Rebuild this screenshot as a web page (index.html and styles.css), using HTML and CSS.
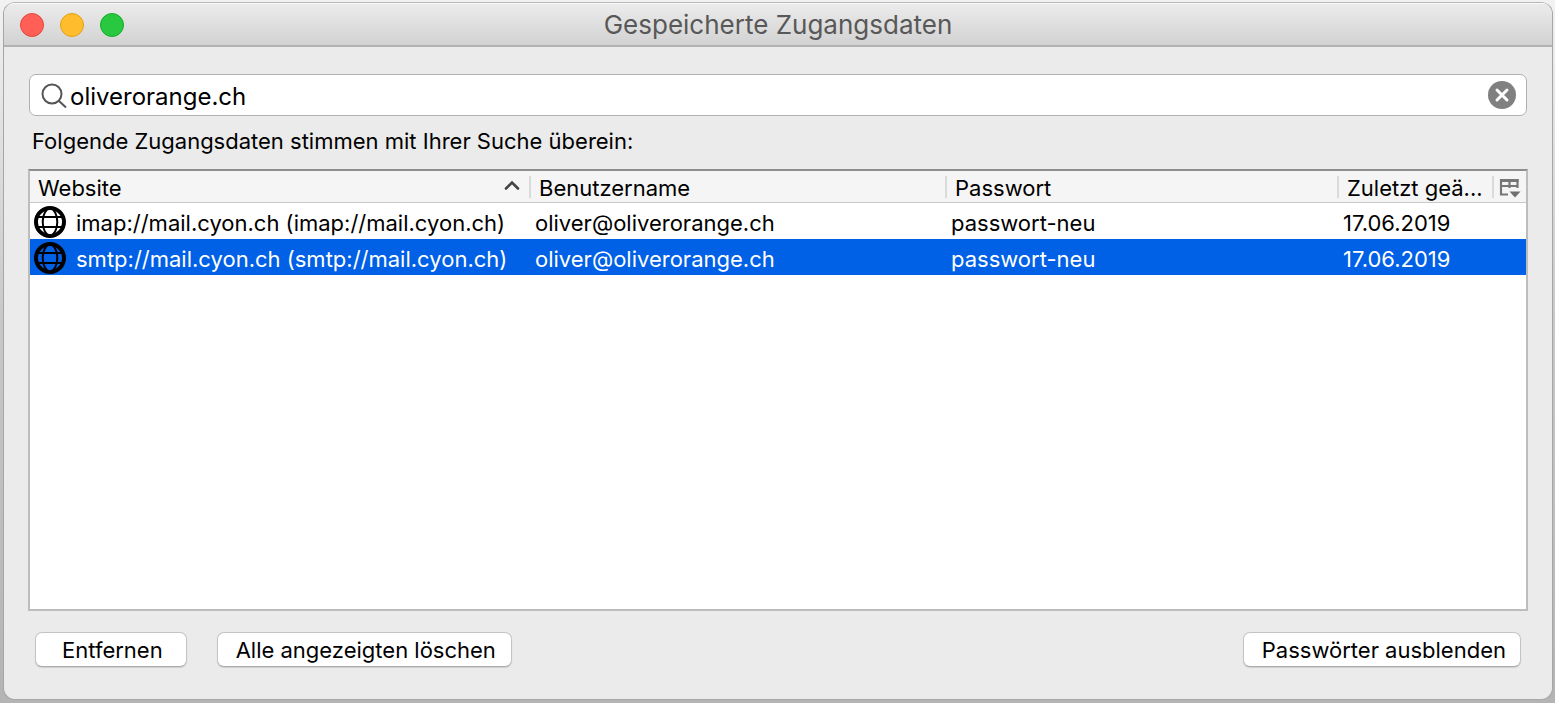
FILE: index.html
```html
<!DOCTYPE html>
<html lang="de">
<head>
<meta charset="utf-8">
<title>Gespeicherte Zugangsdaten</title>
<link rel="stylesheet" href="styles.css">
</head>
<body>
<svg class="defs" aria-hidden="true">
  <symbol id="globe" viewBox="0 0 32 32">
    <g fill="none" stroke="currentColor">
      <circle cx="16" cy="16" r="14" stroke-width="4"/>
      <ellipse cx="16" cy="16" rx="7.3" ry="13.5" stroke-width="2"/>
      <path d="M4 11h24M4 21h24" stroke-width="2"/>
    </g>
  </symbol>
</svg>
<main class="window">
  <header class="titlebar">
    <div class="lights">
      <button class="light close" aria-label="Schliessen"></button>
      <button class="light minimize" aria-label="Minimieren"></button>
      <button class="light maximize" aria-label="Maximieren"></button>
    </div>
    <h1 class="title">Gespeicherte Zugangsdaten</h1>
  </header>
  <div class="content">
    <div class="search">
      <svg class="search-icon" viewBox="0 0 26 26" aria-hidden="true"><g fill="none" stroke="#555" stroke-width="2"><circle cx="11" cy="11" r="9.5"/><path d="M17.5 17.5l7.5 7"/></g></svg>
      <input class="search-input" type="text" value="oliverorange.ch" aria-label="Suchen">
      <button class="clear" aria-label="Suche leeren"><svg viewBox="0 0 28 28"><circle cx="14" cy="14" r="14" fill="#808080"/><path d="M9 9l10 10M19 9L9 19" stroke="#fff" stroke-width="3" stroke-linecap="round"/></svg></button>
    </div>
    <p class="hint">Folgende Zugangsdaten stimmen mit Ihrer Suche überein:</p>
    <div class="list">
      <table class="logins">
        <colgroup><col><col class="col-user"><col class="col-pass"><col class="col-date"><col class="col-picker"></colgroup>
        <thead>
          <tr>
            <th><div class="head"><span>Website</span><svg class="sort" viewBox="0 0 16 10" aria-hidden="true"><path d="M2 8.5l6-6 6 6" fill="none" stroke="#444" stroke-width="2.6" stroke-linecap="round"/></svg></div></th>
            <th><div class="head">Benutzername</div></th>
            <th><div class="head">Passwort</div></th>
            <th><div class="head"><span class="clip">Zuletzt geä...</span></div></th>
            <th><div class="head last"><button class="picker" aria-label="Spalten wählen"><svg viewBox="0 0 22 20"><path d="M9 16.500H2V2H18.500V10M1 8H19.500M10.500 2V10" fill="none" stroke="#777" stroke-width="2.200"/><path d="M1 2.500H19.600" stroke="#777" stroke-width="3"/><path d="M10.500 13.500H21.500L16 19.500Z" fill="#707070"/></svg></button></div></th>
          </tr>
        </thead>
        <tbody>
          <tr>
            <td><div class="site"><svg class="globe"><use href="#globe"/></svg><span>imap://mail.cyon.ch (imap://mail.cyon.ch)</span></div></td>
            <td>oliver@oliverorange.ch</td><td>passwort-neu</td><td>17.06.2019</td><td></td>
          </tr>
          <tr class="selected">
            <td><div class="site"><svg class="globe"><use href="#globe"/></svg><span>smtp://mail.cyon.ch (smtp://mail.cyon.ch)</span></div></td>
            <td>oliver@oliverorange.ch</td><td>passwort-neu</td><td>17.06.2019</td><td></td>
          </tr>
        </tbody>
      </table>
    </div>
    <footer class="actions">
      <button class="button remove">Entfernen</button>
      <button class="button">Alle angezeigten löschen</button>
      <button class="button toggle">Passwörter ausblenden</button>
    </footer>
  </div>
</main>
</body>
</html>
```
FILE: styles.css
```css
* { box-sizing: border-box; }
body {
  margin: 0;
  min-height: 100vh;
  display: flex;
  padding: 2px 2px 3px 3px;
  background: linear-gradient(#f2f2f2, #c8c8c8 45%, #b4b4b4);
  font: 22px/28px Inter, "Liberation Sans", sans-serif;
  color: #000;
}
button, input { font: inherit; color: inherit; }
svg { display: block; }
.defs { position: absolute; width: 0; height: 0; }
.window {
  flex: 1;
  min-width: 0;
  display: flex;
  flex-direction: column;
  background: #ebebeb;
  border: 1px solid #a6a6a6;
  border-top-color: #b8b8b8;
  border-radius: 12px;
  overflow: hidden;
}
.titlebar {
  display: grid;
  grid-template-columns: 1fr auto 1fr;
  align-items: center;
  height: 44px;
  padding: 2px 16px 0;
  background: linear-gradient(#ececec, #d2d2d2);
  border-bottom: 2px solid #b2b2b2;
  box-shadow: inset 0 1px #f8f8f8;
}
.lights { display: flex; gap: 16px; }
.light { width: 24px; height: 24px; padding: 0; border-radius: 50%; border: 1px solid; }
.close { background: #ff5f57; border-color: #e2463f; }
.minimize { background: #ffbd2e; border-color: #e1a116; }
.maximize { background: #28c940; border-color: #12ac28; }
.title { margin: 0; font-size: 26px; font-weight: 400; color: #585858; }
.content {
  flex: 1;
  display: flex;
  flex-direction: column;
  padding: 27px 24px 32px;
}
.search {
  display: flex;
  align-items: center;
  height: 42px;
  margin: 0 1px;
  padding: 0 10px;
  background: #fff;
  border: 1px solid #b0b0b0;
  border-radius: 7px;
}
.search-icon { width: 26px; height: 26px; margin: 2px 3px 0 1px; }
.search-input { flex: 1; min-width: 0; padding: 4px 0 0; border: 0; outline: 0; background: none; font-size: 24px; }
.clear { width: 28px; height: 28px; padding: 0; border: 0; background: none; }
.hint { margin: 11px 4px 14px; }
.list {
  flex: 1;
  background: #fff;
  border: 2px solid #bdbdbd;
  border-top-color: #8e8e8e;
}
.logins { width: 100%; table-layout: fixed; border-collapse: collapse; }
.col-user { width: 416px; }
.col-pass { width: 392px; }
.col-date { width: 155px; }
.col-picker { width: 32px; }
th { padding: 0; background: #f5f5f5; font-weight: 400; text-align: left; box-shadow: inset 0 -1px #c8c8c8; }
.head {
  display: flex;
  align-items: center;
  justify-content: space-between;
  height: 32px;
  padding: 2px 11px 0 8px;
  white-space: nowrap;
  background: linear-gradient(#dadada, #dadada) right 5px / 2px 22px no-repeat;
}
.clip { overflow: hidden; text-overflow: clip; }
.last { padding: 2px 5px 0; background: none; }
.sort { width: 16px; height: 10px; margin-bottom: 6px; }
.picker { padding: 0; border: 0; background: none; }
.picker svg { width: 22px; height: 20px; }
td { height: 36px; padding: 4px 4px 0; white-space: nowrap; }
td:first-child { padding: 2px 4px 0; }
.site { display: flex; align-items: center; gap: 10px; }
.site span { padding-top: 2px; }
.globe { flex: none; width: 32px; height: 32px; color: #000; }
.selected { background: #0060e6; color: #fff; }
.actions { display: flex; gap: 30px; padding: 21px 7px 0; }
.button {
  height: 35px;
  padding: 0 15px 0 18px;
  background: #fff;
  border: 1px solid #c4c4c4;
  border-bottom-color: #acacac;
  border-radius: 7px;
  box-shadow: 0 1px 1px #00000020;
  white-space: nowrap;
}
.remove { padding: 0 23px 0 26px; }
.toggle { margin-left: auto; padding-right: 14px; }
```
